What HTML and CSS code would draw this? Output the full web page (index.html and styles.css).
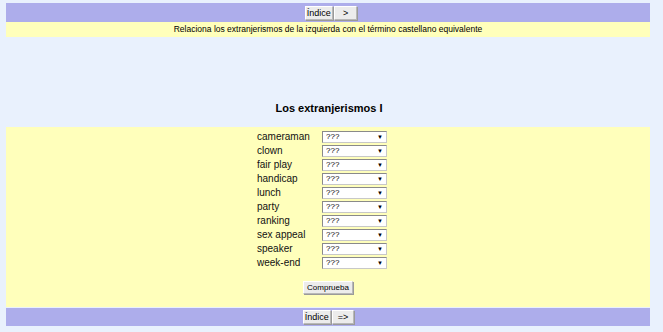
FILE: index.html
```html
<!DOCTYPE html>
<html lang="es">
<head>
    <meta charset="UTF-8">
    <title>Los extranjerismos I</title>
    <link rel="stylesheet" href="styles.css">
</head>
<body>
    <div class="nav">
        <button class="nav-btn">Índice</button><button class="nav-btn next">&gt;</button>
    </div>
    <div class="instr">Relaciona los extranjerismos de la izquierda con el término castellano equivalente</div>

    <div class="head">
        <h1>Los extranjerismos I</h1>
    </div>

    <div class="exercise">
        <div class="pairs">
            <label>cameraman</label><div class="pick"><select><option>???</option></select></div>
            <label>clown</label><div class="pick"><select><option>???</option></select></div>
            <label>fair play</label><div class="pick"><select><option>???</option></select></div>
            <label>handicap</label><div class="pick"><select><option>???</option></select></div>
            <label>lunch</label><div class="pick"><select><option>???</option></select></div>
            <label>party</label><div class="pick"><select><option>???</option></select></div>
            <label>ranking</label><div class="pick"><select><option>???</option></select></div>
            <label>sex appeal</label><div class="pick"><select><option>???</option></select></div>
            <label>speaker</label><div class="pick"><select><option>???</option></select></div>
            <label>week-end</label><div class="pick"><select><option>???</option></select></div>
        </div>
        <div class="check">
            <button class="nav-btn check-btn">Comprueba</button>
        </div>
    </div>

    <div class="nav nav-bottom">
        <button class="nav-btn">Índice</button><button class="nav-btn">=&gt;</button>
    </div>
</body>
</html>
```

FILE: styles.css
```css
body {
    font-family: 'Liberation Sans', Arial, sans-serif;
    background-color: #e9f1fd;
    color: #000;
    margin: 3px 13px 0 6px;
}
.nav {
    background-color: #adadeb;
    height: 19px;
    display: flex;
    justify-content: center;
    align-items: center;
    padding-left: 6px;
}
.nav-bottom {
    margin-top: 1px;
    height: 18px;
    padding-left: 1px;
}
.nav-btn {
    box-sizing: border-box;
    font-family: inherit;
    font-size: 9px;
    height: 14px;
    line-height: 12px;
    padding: 0 1px;
    margin: 0;
    background: #ececec;
    color: #000;
    border: 1px solid #b8b8b8;
    border-left-color: #fff;
    border-top-color: #fff;
    box-shadow: 1px 1px 0 #9a9a9a;
}
.nav-btn + .nav-btn {
    margin-left: 1px;
    padding: 0 5px;
}
.nav-btn.next {
    padding: 0 8px;
}
.instr {
    background-color: #ffffbb;
    height: 15px;
    line-height: 15px;
    font-size: 8.5px;
    text-align: center;
}
.head {
    height: 90px;
    display: flex;
    align-items: flex-end;
    justify-content: center;
}
h1 {
    font-size: 11px;
    margin: 0 0 13px 2px;
    color: #000;
}
.exercise {
    background-color: #ffffbb;
    padding: 3px 0 13px;
}
.pairs {
    display: grid;
    grid-template-columns: 65px 65px;
    grid-auto-rows: 14px;
    justify-content: center;
    padding-right: 12px;
}
.pairs label {
    font-size: 10px;
    line-height: 14px;
    color: #111;
}
.pick {
    position: relative;
    padding-top: 1px;
    height: 12px;
}
.pick select {
    display: block;
    box-sizing: border-box;
    appearance: none;
    -webkit-appearance: none;
    width: 65px;
    height: 12px;
    margin: 0;
    padding: 0 0 0 3px;
    font-family: inherit;
    font-size: 8px;
    line-height: 10px;
    background: #fff;
    color: #000;
    border: 1px solid #c8c8c8;
    border-left-color: #8a8a8a;
    border-top-color: #8a8a8a;
    border-radius: 0;
}
.pick::after {
    content: "▼";
    position: absolute;
    right: 4px;
    top: 3px;
    font-size: 6px;
    line-height: 8px;
    pointer-events: none;
}
.check {
    display: flex;
    justify-content: center;
    margin-top: 11px;
}
.check-btn {
    height: 13px;
    padding: 0 3px;
    font-size: 8px;
}
```
